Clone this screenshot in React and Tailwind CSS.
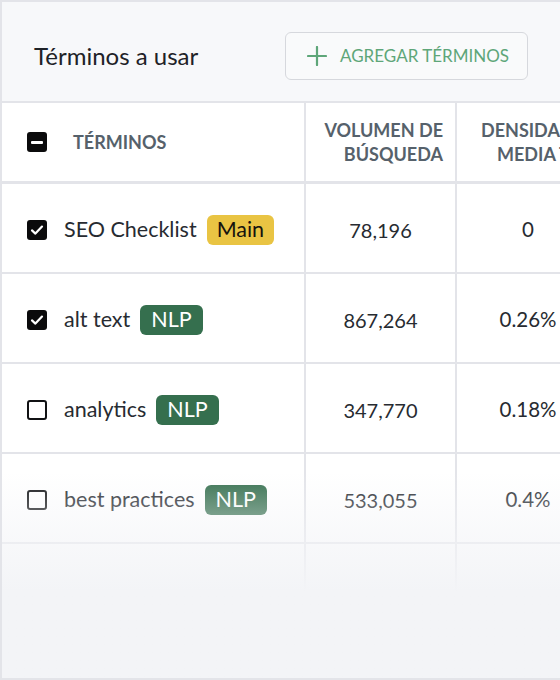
import React from "react";

const font = { fontFamily: "Lato, 'Noto Sans', sans-serif" };

function Box({ state }) {
  if (state === "none") {
    return <div className="w-[20px] h-[20px] shrink-0 rounded-[3px] border-2 border-[#111214] bg-white" />;
  }
  return (
    <div className="w-[20px] h-[20px] shrink-0 rounded-[3px] bg-[#0b0b0c] flex items-center justify-center">
      {state === "check" ? (
        <svg width="14" height="14" viewBox="0 0 14 14" fill="none">
          <path d="M2 7.4 L5.4 10.6 L12 3.6" stroke="white" strokeWidth="2.2" strokeLinecap="round" strokeLinejoin="round" />
        </svg>
      ) : (
        <div className="w-[12px] h-[3px] bg-white rounded-[1px]" />
      )}
    </div>
  );
}

function Badge({ kind }) {
  if (kind === "Main") {
    return (
      <span className="inline-flex items-center h-[30px] px-[10px] rounded-[6px] bg-[#e9c443] text-[21.5px] text-[#15130e] leading-none">
        Main
      </span>
    );
  }
  return (
    <span className="inline-flex items-center h-[30px] px-[11px] rounded-[6px] bg-[#356f4e] text-[21.5px] text-white leading-none">
      NLP
    </span>
  );
}

const rows = [
  { state: "check", term: "SEO Checklist", badge: "Main", vol: "78,196", dens: "0" },
  { state: "check", term: "alt text", badge: "NLP", vol: "867,264", dens: "0.26%" },
  { state: "none", term: "analytics", badge: "NLP", vol: "347,770", dens: "0.18%" },
  { state: "none", term: "best practices", badge: "NLP", vol: "533,055", dens: "0.4%" },
  { state: "none", term: "", badge: null, vol: "", dens: "" },
];

export default function App() {
  return (
    <div style={font} className="relative w-[560px] h-[680px] overflow-hidden bg-white border-2 border-r-0 border-[#e3e4e9]">
      <div className="h-[101px] bg-[#f7f8fa] border-b-2 border-[#e3e4e9] flex items-center pl-[32px] pt-[9px]">
        <div className="text-[24px] text-[#1e2227] w-[251px]">Términos a usar</div>
        <div className="h-[48px] w-[243px] rounded-[6px] border-[1.5px] border-[#d6d8dd] bg-[#f9fafb] flex items-center pl-[21px] gap-[13px]">
          <svg width="20" height="20" viewBox="0 0 20 20" fill="none">
            <path d="M10 1 V19 M1 10 H19" stroke="#5ea679" strokeWidth="2.2" strokeLinecap="round" />
          </svg>
          <span className="text-[17px] text-[#5ea679]">AGREGAR TÉRMINOS</span>
        </div>
      </div>

      <div className="flex h-[81px] border-b-[3px] border-[#e3e4e9]">
        <div className="w-[304px] shrink-0 border-r-2 border-[#e3e4e9] flex items-center pl-[25px] gap-[26px]">
          <Box state="minus" />
          <span className="text-[18px] font-bold text-[#56616b]">TÉRMINOS</span>
        </div>
        <div className="w-[151px] shrink-0 border-r-2 border-[#e3e4e9] flex items-center justify-end pr-[12px]">
          <div className="text-right text-[18px] font-bold text-[#56616b] leading-[24px]">
            VOLUMEN DE<br />BÚSQUEDA
          </div>
        </div>
        <div className="w-[160px] shrink-0 flex items-center pl-[24px]">
          <div className="text-[18px] font-bold text-[#56616b] leading-[24px] whitespace-nowrap">
            <div>DENSIDAD</div>
            <div className="pl-[16px]">MEDIA TOP</div>
          </div>
        </div>
      </div>

      {rows.map((r, i) => (
        <div key={i} className="flex h-[90px] border-b-2 border-[#e3e4e9]">
          <div className="w-[304px] shrink-0 border-r-2 border-[#e3e4e9] flex items-center pl-[25px] gap-[17px] pt-[3px]">
            {r.term && <Box state={r.state} />}
            {r.term && (
              <div className="flex items-center gap-[10px]">
                <span className="text-[21.5px] text-[#272b31]">{r.term}</span>
                <Badge kind={r.badge} />
              </div>
            )}
          </div>
          <div className="w-[151px] shrink-0 border-r-2 border-[#e3e4e9] flex items-center justify-center pt-[3px]">
            <span className="text-[20px] text-[#272b31]">{r.vol}</span>
          </div>
          <div className="w-[142px] shrink-0 flex items-center justify-center pt-[3px]">
            <span className="text-[20.5px] text-[#272b31]">{r.dens}</span>
          </div>
        </div>
      ))}

      <div className="absolute left-0 right-0 top-[470px] bottom-0 bg-gradient-to-b from-[#f3f4f7]/0 via-[#f3f4f7]/70 via-40% to-[#f3f4f7] to-58%" />
    </div>
  );
}
